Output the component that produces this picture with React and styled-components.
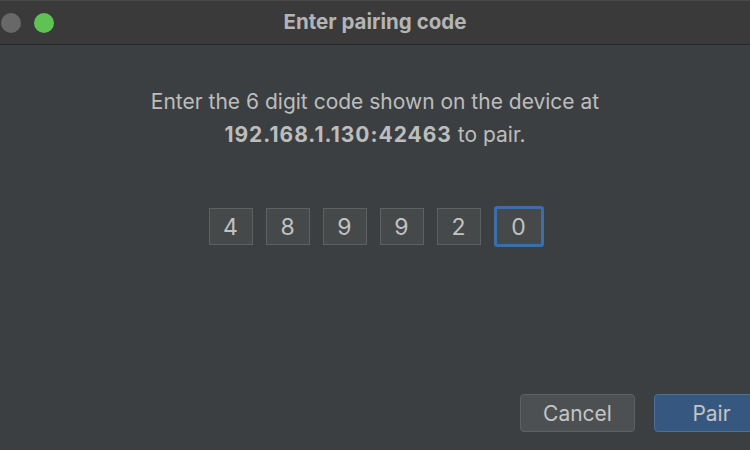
import styled, { createGlobalStyle } from 'styled-components';

const digits = ['4', '8', '9', '9', '2', '0'];

export default function App() {
    return (
        <>
            <Global />
            <Window>
                <TitleBar>
                    <Lights>
                        <Light color="#686868" />
                        <Light color="#5ec352" />
                    </Lights>
                    <Title>Enter pairing code</Title>
                </TitleBar>
                <Content>
                    <Message>
                        Enter the 6 digit code shown on the device at
                        <br />
                        <strong>192.168.1.130:42463</strong> to pair.
                    </Message>
                    <CodeRow>
                        {digits.map((d, i) =>
                            <Digit key={i} focused={i === digits.length - 1}>{d}</Digit>
                        )}
                    </CodeRow>
                    <Footer>
                        <Button>Cancel</Button>
                        <Button primary>Pair</Button>
                    </Footer>
                </Content>
            </Window>
        </>
    );
}

const Global = createGlobalStyle`
    html, body {
        margin: 0;
        padding: 0;
        background: #3c3f41;
    }
    body {
        font-family: Inter, "Liberation Sans", sans-serif;
    }
`;

const Window = styled.div`
    width: 750px;
    height: 450px;
    display: flex;
    flex-direction: column;
    overflow: hidden;
    background: #3c3f41;
    color: #bbbbbb;
`;

const TitleBar = styled.div`
    height: 45px;
    flex-shrink: 0;
    position: relative;
    display: flex;
    align-items: center;
    justify-content: center;
    background: #3a3a3a;
    border-top: 1px solid #4a4a4a;
    border-bottom: 1px solid #262626;
    box-sizing: border-box;
`;

const Lights = styled.div`
    position: absolute;
    left: 1px;
    top: 12px;
    display: flex;
    gap: 13px;
`;

const Light = styled.span`
    width: 20px;
    height: 20px;
    border-radius: 50%;
    background: ${p => p.color};
`;

const Title = styled.div`
    font-size: 20.5px;
    font-weight: 700;
    color: #b4b4b4;
    margin-top: -2px;
`;

const Content = styled.div`
    flex: 1;
    display: flex;
    flex-direction: column;
    align-items: center;
    padding-top: 40px;
`;

const Message = styled.p`
    margin: 0;
    font-size: 21px;
    line-height: 33px;
    text-align: center;
    color: #bdbdbd;

    strong {
        font-weight: 700;
        letter-spacing: 1px;
    }
`;

const CodeRow = styled.div`
    margin-top: 55px;
    margin-left: 2px;
    display: flex;
    align-items: center;
    gap: 13px;
`;

const Digit = styled.div`
    box-sizing: border-box;
    width: ${p => p.focused ? '50px' : '44px'};
    height: ${p => p.focused ? '41px' : '37px'};
    display: flex;
    align-items: center;
    justify-content: center;
    border: ${p => p.focused ? '3px solid #3d6ea5' : '1px solid #5e6162'};
    border-radius: ${p => p.focused ? '3px' : '0'};
    background: #45494a;
    font-size: 23px;
    color: #c2c2c2;
`;

const Footer = styled.div`
    margin-top: auto;
    margin-bottom: 18px;
    align-self: stretch;
    display: flex;
    justify-content: flex-end;
    gap: 19px;
    margin-right: -19px;
`;

const Button = styled.button`
    box-sizing: border-box;
    width: 115px;
    height: 38px;
    border-radius: 4px;
    font-family: inherit;
    font-size: 21px;
    color: #c4c4c4;
    background: ${p => p.primary ? '#365880' : '#4c5052'};
    border: 1px solid ${p => p.primary ? '#4c709b' : '#5e6162'};
`;
